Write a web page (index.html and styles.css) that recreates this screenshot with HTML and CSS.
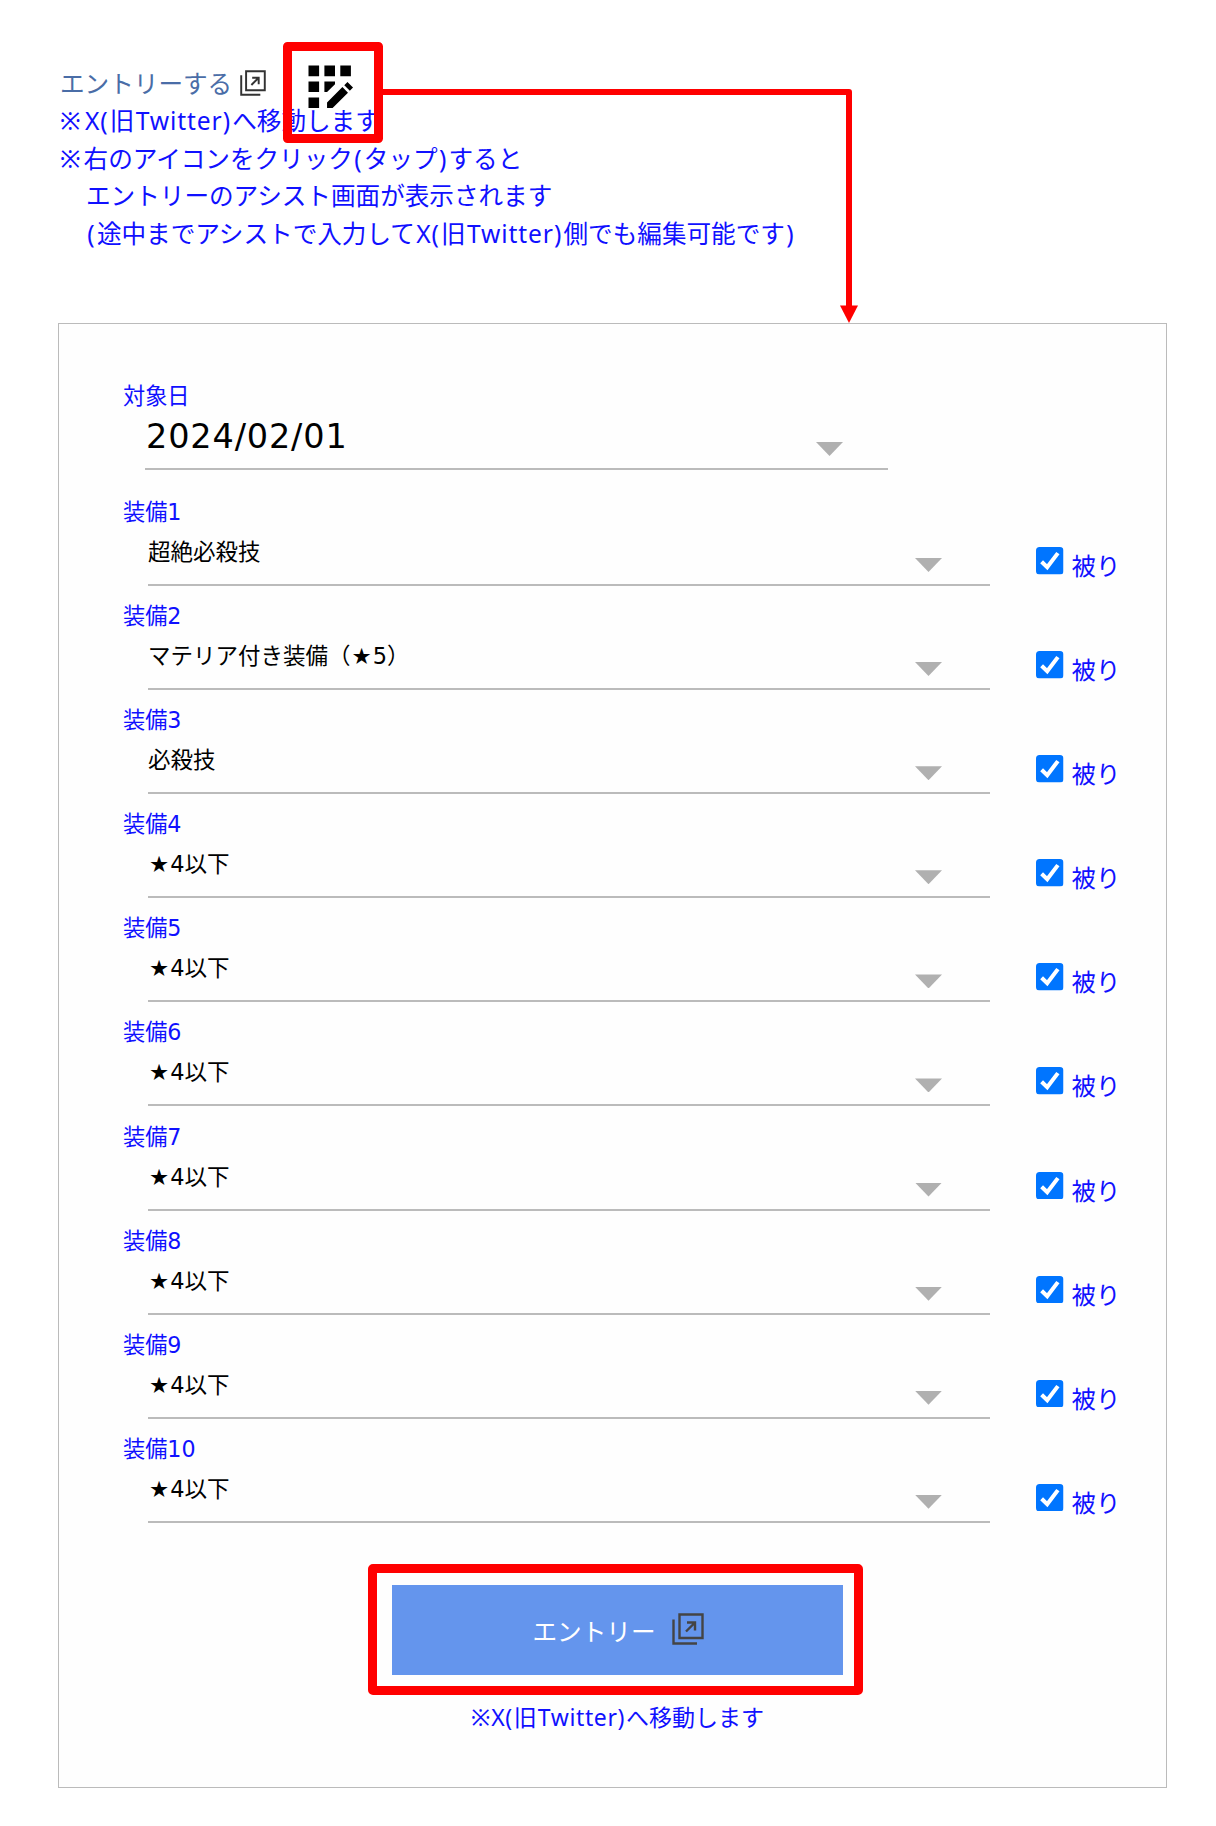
FILE: index.html
```html
<!DOCTYPE html>
<html lang="ja">
<head>
<meta charset="UTF-8">
<title>エントリー</title>
<link rel="stylesheet" href="styles.css">
</head>
<body>
<svg class="defs" aria-hidden="true">
  <symbol id="external" viewBox="0 0 32 32">
    <path d="M7.500 1.500H30.500V25H7.500ZM1.500 6.500V30.500H25M14 18.500L22 10.500M15 9.500H23V17.500" fill="none" stroke="currentColor" stroke-width="2.4"/>
  </symbol>
  <symbol id="check" viewBox="0 0 27 27">
    <rect width="27" height="27" rx="3.500" fill="#0075ff"/>
    <path d="M5.500 14.500L11 19.800L21.500 6" fill="none" stroke="#fff" stroke-width="4"/>
  </symbol>
</svg>
<main class="page">
  <section class="intro">
    <p class="entry"><a class="entry-link">エントリーする</a><svg class="entry-icon"><use href="#external"/></svg></p>
    <p><span class="mark">※</span><span class="latin">X(</span>旧<span class="latin">Twitter)</span>へ移動します</p>
    <p><span class="mark">※</span>右のアイコンをクリック<span class="latin">(</span>タップ<span class="latin">)</span>すると</p>
    <p class="indent">エントリーのアシスト画面が表示されます</p>
    <p class="indent"><span class="latin">(</span>途中までアシストで入力して<span class="latin">X(</span>旧<span class="latin">Twitter)</span>側でも編集可能です<span class="latin">)</span></p>
  </section>

  <form class="panel">
    <div class="field date">
      <div class="label">対象日</div>
      <div class="select"><span>2024/02/01</span><i class="caret"></i></div>
    </div>
    <div class="rows">
      <div class="row"><div class="field"><div class="label">装備1</div><div class="select"><span>超絶必殺技</span><i class="caret"></i></div></div><label class="dup"><svg><use href="#check"/></svg><span>被り</span></label></div>
      <div class="row"><div class="field"><div class="label">装備2</div><div class="select"><span>マテリア付き装備（<b>★</b>5）</span><i class="caret"></i></div></div><label class="dup"><svg><use href="#check"/></svg><span>被り</span></label></div>
      <div class="row"><div class="field"><div class="label">装備3</div><div class="select"><span>必殺技</span><i class="caret"></i></div></div><label class="dup"><svg><use href="#check"/></svg><span>被り</span></label></div>
      <div class="row"><div class="field"><div class="label">装備4</div><div class="select"><span><b>★</b>4以下</span><i class="caret"></i></div></div><label class="dup"><svg><use href="#check"/></svg><span>被り</span></label></div>
      <div class="row"><div class="field"><div class="label">装備5</div><div class="select"><span><b>★</b>4以下</span><i class="caret"></i></div></div><label class="dup"><svg><use href="#check"/></svg><span>被り</span></label></div>
      <div class="row"><div class="field"><div class="label">装備6</div><div class="select"><span><b>★</b>4以下</span><i class="caret"></i></div></div><label class="dup"><svg><use href="#check"/></svg><span>被り</span></label></div>
      <div class="row"><div class="field"><div class="label">装備7</div><div class="select"><span><b>★</b>4以下</span><i class="caret"></i></div></div><label class="dup"><svg><use href="#check"/></svg><span>被り</span></label></div>
      <div class="row"><div class="field"><div class="label">装備8</div><div class="select"><span><b>★</b>4以下</span><i class="caret"></i></div></div><label class="dup"><svg><use href="#check"/></svg><span>被り</span></label></div>
      <div class="row"><div class="field"><div class="label">装備9</div><div class="select"><span><b>★</b>4以下</span><i class="caret"></i></div></div><label class="dup"><svg><use href="#check"/></svg><span>被り</span></label></div>
      <div class="row"><div class="field"><div class="label">装備10</div><div class="select"><span><b>★</b>4以下</span><i class="caret"></i></div></div><label class="dup"><svg><use href="#check"/></svg><span>被り</span></label></div>
    </div>
    <div class="highlight">
      <button class="submit" type="button"><span>エントリー</span><svg><use href="#external"/></svg></button>
    </div>
    <p class="note">※<span class="latin">X(</span>旧<span class="latin">Twitter)</span>へ移動します</p>
  </form>

  <!-- assist icon, its frame and the arrow down to the form -->
  <svg class="callout" viewBox="0 0 600 290">
    <g transform="translate(23.2 24.3) scale(2.65)">
      <path d="M2 2H6V6H2ZM8 2H12V6H8ZM14 2H18V6H14ZM2 8H6V12H2ZM8 8H12V9L9 12H8ZM2 14H6V18H2Z"/>
      <path d="M9 18V15.900L14.800 10.100L16.900 12.200L11.100 18ZM15.500 9.400L16.700 8.200L18.800 10.300L17.600 11.500Z"/>
    </g>
    <rect x="7.500" y="10.500" width="91" height="92" fill="none" stroke="#f00" stroke-width="9" stroke-linejoin="round"/>
    <path d="M103 56H569V272" fill="none" stroke="#f00" stroke-width="6" stroke-linejoin="round"/>
    <path d="M560 269.500H578L569 287Z" fill="#f00"/>
  </svg>
</main>
</body>
</html>
```
FILE: styles.css
```css
* { box-sizing: border-box; }
body { margin: 0; background: #fff; }
p { margin: 0; }
.defs { position: absolute; width: 0; height: 0; }

.page {
  position: relative;
  width: 1216px;
  height: 1826px;
  padding: 65px 49px 0 58px;
  font-family: "Noto Sans", "Noto Sans CJK JP", sans-serif;
  color: #1010ff;
}

.intro {
  height: 258px;
  padding-left: 2px;
  font-size: 24.6px;
  line-height: 37.4px;
  white-space: nowrap;
}
.mark { margin-right: 3px; }
.latin { margin: 0 1px; letter-spacing: .6px; }
.intro .latin { margin: 0 1.3px; letter-spacing: .9px; }
.entry { display: flex; align-items: flex-start; gap: 8px; }
.entry-link { color: #4a6da7; }
.entry-icon { width: 26px; height: 26px; margin-top: 5px; color: #333; }
.indent { padding-left: 26px; }

.callout {
  position: absolute;
  left: 280px;
  top: 36px;
  width: 600px;
  height: 290px;
}

.panel {
  display: flex;
  flex-direction: column;
  width: 1109px;
  height: 1465px;
  padding: 60px 0 0 64px;
  border: 1px solid #bbb;
  background: #fefefe;
  font-family: "DejaVu Sans", "Noto Sans CJK JP", sans-serif;
}
.field { display: flex; flex-direction: column; }
.label { height: 27px; font-size: 22.2px; line-height: 27px; }
.select {
  display: flex;
  justify-content: space-between;
  height: 60px;
  margin-left: 25px;
  border-bottom: 2px solid #bbb;
  color: #000;
  font-size: 22.5px;
  line-height: 52px;
}
.select b { margin: 0 1px; font-weight: 400; }
.caret {
  width: 27px;
  height: 14px;
  margin: 32px 48px 0 0;
  background: #b0b0b0;
  clip-path: polygon(0 0, 100% 0, 50% 100%);
}

.date { width: 765px; height: 115px; }
.date .label { height: 26px; line-height: 25px; }
.date .select {
  margin-left: 22px;
  padding-left: 1px;
  font-size: 33.5px;
  line-height: 54px;
  letter-spacing: .85px;
}
.date .caret { margin-right: 45px; }

.row {
  display: grid;
  grid-template-columns: 867px auto;
  column-gap: 46px;
  height: 104.1px;
}
.dup {
  display: flex;
  gap: 8px;
  padding-top: 48px;
  font-size: 24.4px;
  line-height: 40px;
}
.dup svg { width: 27.500px; height: 27.500px; }

.highlight {
  width: 495px;
  height: 131px;
  margin: 24.5px 0 0 245px;
  padding: 12px 15px;
  border: 9px solid #f00;
  border-radius: 5px;
}
.submit {
  display: flex;
  align-items: center;
  justify-content: center;
  gap: 17px;
  width: 451px;
  height: 90px;
  padding: 0 0 0 2px;
  border: 0;
  background: #6495ed;
  color: #fff;
  font: 400 24.6px "Noto Sans CJK JP", sans-serif;
}
.submit span { margin-top: -1px; }
.submit svg { width: 32px; height: 32px; margin-top: -3px; color: #444; }
.note {
  width: 495px;
  margin: 4px 0 0 247px;
  font-family: "Noto Sans", "Noto Sans CJK JP", sans-serif;
  font-size: 23px;
  line-height: 36px;
  text-align: center;
}
```
